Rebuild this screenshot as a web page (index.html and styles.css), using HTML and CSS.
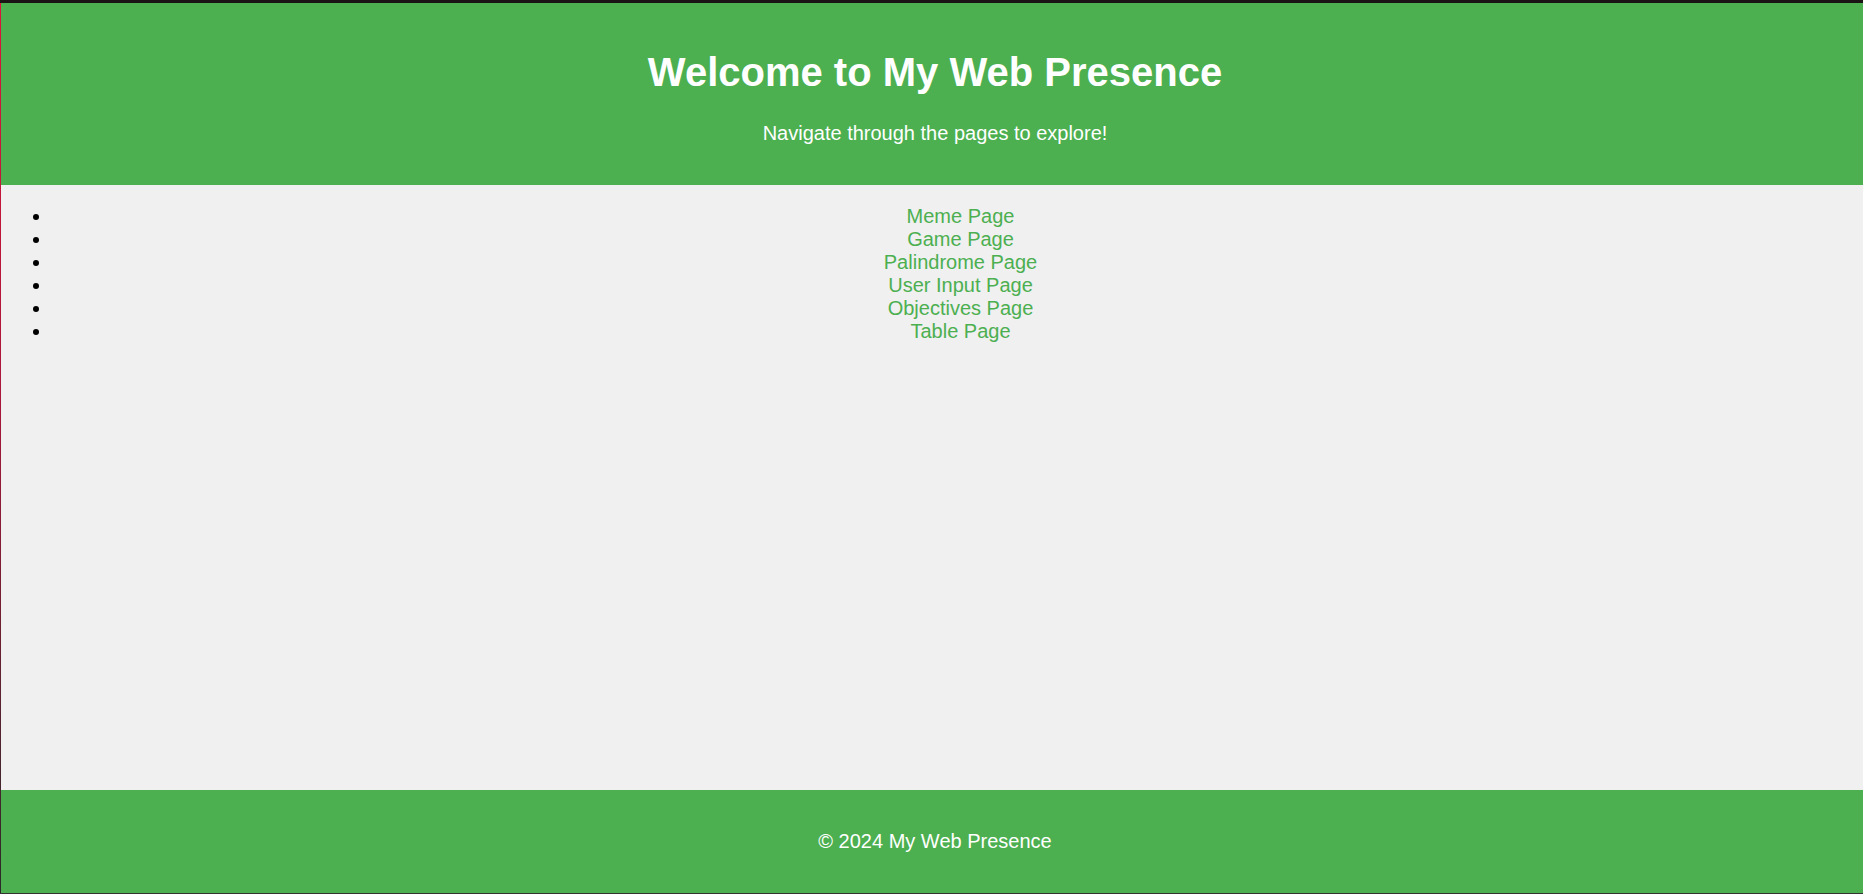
FILE: index.html
```html
<!DOCTYPE html>
<html lang="en">
<head>
<meta charset="utf-8">
<title>My Web Presence</title>
<link rel="stylesheet" href="styles.css">
</head>
<body>
<div class="frame">
  <div class="page">
    <header class="site-header">
      <h1 class="title">Welcome to My Web Presence</h1>
      <p class="subtitle">Navigate through the pages to explore!</p>
    </header>
    <main class="content">
      <nav>
        <ul class="page-list">
          <li><a href="#">Meme Page</a></li>
          <li><a href="#">Game Page</a></li>
          <li><a href="#">Palindrome Page</a></li>
          <li><a href="#">User Input Page</a></li>
          <li><a href="#">Objectives Page</a></li>
          <li><a href="#">Table Page</a></li>
        </ul>
      </nav>
    </main>
    <footer class="site-footer">
      <p class="copy">&copy; 2024 My Web Presence</p>
    </footer>
  </div>
</div>
</body>
</html>
```

FILE: styles.css
```css
html, body {
  margin: 0;
  padding: 0;
}

body {
  font-family: "Liberation Sans", Arial, sans-serif;
  font-size: 20px;
  background: #f0f0f0;
}

.frame {
  box-sizing: border-box;
  height: 100vh;
  border-top: 3px solid #1b1414;
  border-bottom: 1px solid #333333;
  padding-left: 1px;
  background: linear-gradient(to bottom, #dc143c 0%, #a8173a 45%, #2a2a2a 100%);
  display: flex;
}

.page {
  flex: 1;
  display: flex;
  flex-direction: column;
  background: #f0f0f0;
}

.site-header {
  background: #4caf50;
  color: #ffffff;
  text-align: center;
  padding: 20px 20px 20px 26px;
}

.title {
  font-size: 2em;
  margin: 0.67em 0;
}

.subtitle {
  margin: 1em 0;
}

.content {
  flex: 1;
}

.page-list {
  margin: 20px 0;
  padding-left: 51px;
  text-align: center;
}

.page-list a {
  color: #4caf50;
  text-decoration: none;
  padding-left: 6px;
}

.site-footer {
  background: #4caf50;
  color: #ffffff;
  text-align: center;
  padding: 40px 20px 40px 26px;
}

.copy {
  margin: 0;
}
```
